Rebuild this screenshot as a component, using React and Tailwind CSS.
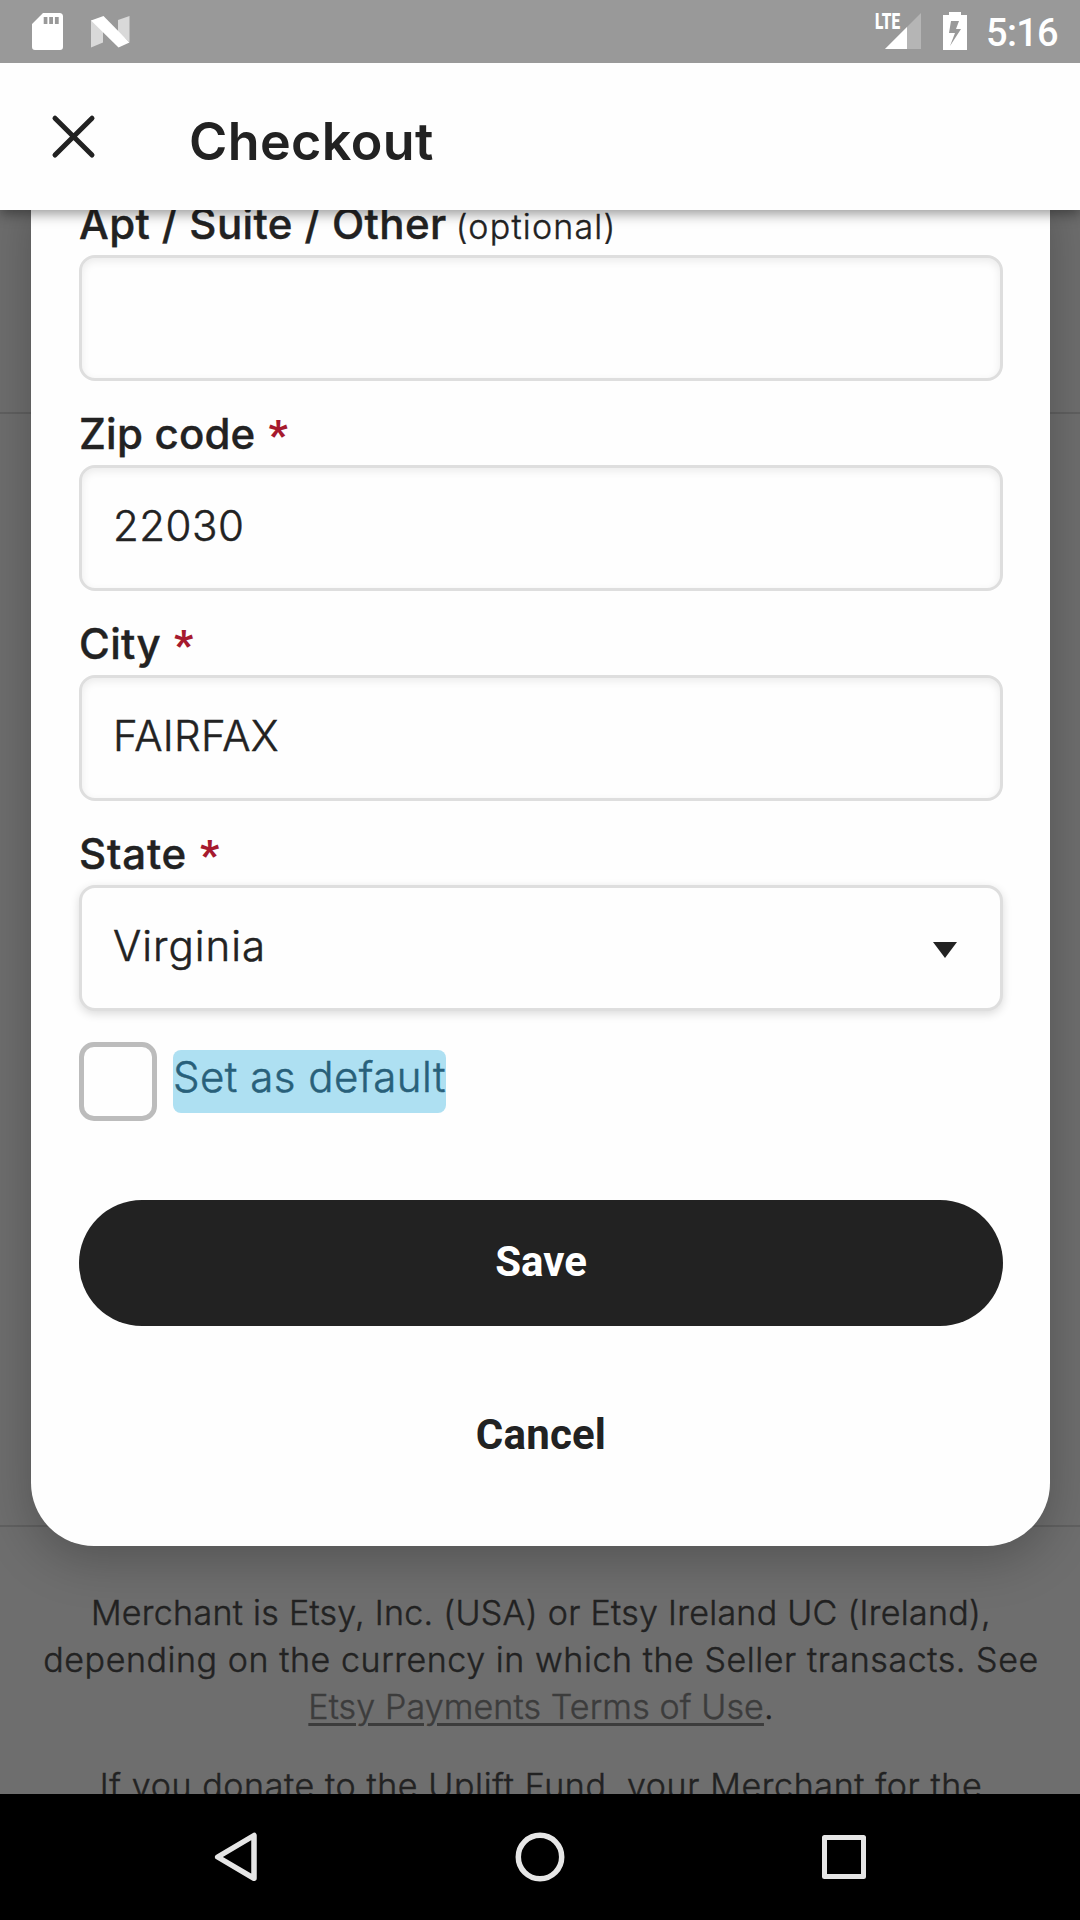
function StatusBar() {
  return (
    <div className="relative z-20 flex h-[63px] items-start bg-[#999999] text-white">
      <svg className="ml-[30px] mt-[11px] h-[42px] w-[34px]" viewBox="0 0 34 42">
        <path
          fill="#fff"
          fillRule="evenodd"
          d="M13 2h16.500a3.500 3.500 0 0 1 3.500 3.500v30.500a3 3 0 0 1-3 3H5a3 3 0 0 1-3-3V13zM13.700 6v7h3.700V6zM19.200 6v7H23V6zM24.900 6v7h3.800V6z"
        />
      </svg>
      <svg className="ml-[26px] mt-[14px] h-[34px] w-[40px]" viewBox="0 0 40 34">
        <path fill="#d9d9d9" d="M1 6 13 14V28.500L1 33.500zM28 6 39.500 2V28L28 18z" />
        <path fill="#fff" d="M1 6.500 13.500 2 39.500 28.500 28.500 33.500z" />
      </svg>
      <svg className="ml-auto mt-[11px] h-[40px] w-[48px] overflow-visible" viewBox="0 0 48 40">
        <path fill="#b5b5b5" d="M47 2V38H11z" />
        <path fill="#fff" d="M33 16V38H11z" />
        <text
          x="1"
          y="18.300"
          fill="#fff"
          textLength="25"
          lengthAdjust="spacingAndGlyphs"
          className="font-['Roboto',sans-serif] text-[22.500px] font-black"
        >
          LTE
        </text>
      </svg>
      <svg className="ml-[21px] mt-[12px] h-[38px] w-[24px]" viewBox="0 0 24 38">
        <path
          fill="#fff"
          fillRule="evenodd"
          d="M6 0h12v3h6v35H0V3h6zM8 9 6 21h6L7 34 18 17h-5l3-8z"
        />
      </svg>
      <div className="ml-[19px] mr-[21px] mt-[6px] w-[73px] whitespace-nowrap font-['Roboto',sans-serif] text-[38px] font-medium leading-[54px] tracking-[-0.7px]">
        5:16
      </div>
    </div>
  );
}

function Header() {
  return (
    <header className="relative z-10 flex h-[147px] items-start bg-[#fefefe] shadow-[0_4px_12px_rgba(0,0,0,0.4)]">
      <svg className="ml-[51px] mt-[50px] h-[46px] w-[45px]" viewBox="0 0 45 46" fill="none" stroke="#222" strokeWidth="5" strokeLinecap="round">
        <path d="M4 5.200 41 42M41 5.200 4 42" />
      </svg>
      <h1 className="ml-[93px] mt-[49px] text-[52px] font-semibold leading-[60px] tracking-[0.4px]">Checkout</h1>
    </header>
  );
}

function Label({ children, required, optional, tracking }) {
  return (
    <div className="mb-2 flex h-[46px] items-baseline whitespace-nowrap text-[42px] leading-[46px]">
      <span className={"font-medium [-webkit-text-stroke:0.4px_#222] " + tracking}>{children}</span>
      {required && (
        <span className="ml-[13px] font-['Roboto',sans-serif] text-[41px] font-black leading-[46px] text-[#a61a2e]">*</span>
      )}
      {optional && <span className="ml-[9px] text-[34px] font-light tracking-[1.2px] [-webkit-text-stroke:0.4px_#222]">(optional)</span>}
    </div>
  );
}

function Field({ label, labelTracking, required, optional, value, select, tracking }) {
  return (
    <div className="mb-[30px]">
      <Label required={required} optional={optional} tracking={labelTracking}>{label}</Label>
      <div
        className={
          "flex h-[126px] items-center rounded-[16px] border-[3px] border-[#dedede] bg-[#fefefe] pb-[5px] pl-[31px] pr-[43px] text-[42px] font-light [-webkit-text-stroke:0.5px_#222] " +
          (select
            ? "shadow-[0_3px_10px_rgba(0,0,0,0.14)]"
            : "shadow-[inset_0_3px_8px_rgba(0,0,0,0.08)]")
        }
      >
        <span className={tracking}>{value}</span>
        {select && (
          <svg className="ml-auto mt-[9px] h-[16px] w-[24px]" viewBox="0 0 24 16">
            <path fill="#222" d="M0 0h24L12 16z" />
          </svg>
        )}
      </div>
    </div>
  );
}

function AddressDialog() {
  return (
    <div className="absolute -top-[20px] left-[31px] right-[30px] h-[1356px] rounded-b-[63px] bg-[#fefefe] pl-[48px] pr-[47px] pt-[11px] shadow-[0_12px_50px_rgba(0,0,0,0.25)]">
      <Field label="Apt / Suite / Other" labelTracking="tracking-[0.4px]" optional />
      <Field label="Zip code" labelTracking="tracking-[0.2px]" required value="22030" tracking="tracking-[0.5px]" />
      <Field label="City" labelTracking="tracking-[0.35px]" required value="FAIRFAX" tracking="tracking-[0.3px]" />
      <Field label="State" labelTracking="tracking-[0.8px]" required value="Virginia" select tracking="tracking-[1px]" />

      <div className="mt-[31px] flex items-start">
        <div className="h-[79px] w-[78px] rounded-[15px] border-[5px] border-[#bcbcbc]" />
        <div className="ml-[16px] mt-[8px] h-[63px] w-[273px] whitespace-nowrap rounded-[8px] bg-[#aee0f2] text-[42px] font-light leading-[54px] tracking-[0.49px] text-[#28607a] [-webkit-text-stroke:0.5px_#28607a]">
          Set as default
        </div>
      </div>

      <div className="mt-[79px] flex h-[126px] items-center justify-center rounded-full bg-[#222] pb-[3px] font-['Roboto',sans-serif] text-[42px] font-bold text-white">
        Save
      </div>
      <div className="mt-[45px] flex h-[126px] items-center justify-center font-['Roboto',sans-serif] text-[42px] font-bold tracking-[0.19px]">
        Cancel
      </div>
    </div>
  );
}

function PageBehind() {
  return (
    <div className="text-center text-[34px] font-light leading-[47px]">
      <div className="h-[204px] border-b-2 border-[#606060]" />
      <div className="h-[1113px] border-b-2 border-[#606060]" />
      <div className="whitespace-nowrap pl-[2px] pt-[62px] [-webkit-text-stroke:0.45px]">
        <p className="tracking-[0.29px]">Merchant is Etsy, Inc. (USA) or Etsy Ireland UC (Ireland),</p>
        <p className="tracking-[0.57px]">depending on the currency in which the Seller transacts. See</p>
        <p className="tracking-[0.12px]">
          <span className="text-[#3c3c3c] underline decoration-[2.500px] underline-offset-[4px]">Etsy Payments Terms of Use</span>.
        </p>
        <p className="mt-[32px] tracking-[0.62px]">If you donate to the Uplift Fund, your Merchant for the</p>
      </div>
    </div>
  );
}

function NavBar() {
  return (
    <nav className="flex h-[126px] items-center justify-center gap-[246px] bg-black">
      <svg className="size-[58px]" viewBox="0 0 58 58" fill="none" stroke="#e6e6e6" strokeWidth="5.500" strokeLinejoin="round">
        <path d="M47 7.500V50.300L10.700 29z" />
      </svg>
      <svg className="size-[58px]" viewBox="0 0 58 58" fill="none" stroke="#e6e6e6" strokeWidth="5.500">
        <circle cx="29" cy="29" r="21.700" />
      </svg>
      <svg className="size-[58px]" viewBox="0 0 58 58" fill="none" stroke="#e6e6e6" strokeWidth="5" strokeLinejoin="round">
        <rect x="9.500" y="9.500" width="39" height="39" />
      </svg>
    </nav>
  );
}

export default function App() {
  return (
    <div className="flex h-[1920px] w-[1080px] flex-col overflow-hidden font-['Inter',sans-serif] text-[#222]">
      <StatusBar />
      <Header />
      <main className="relative h-[1584px] overflow-hidden bg-[#6e6e6e]">
        <PageBehind />
        <AddressDialog />
      </main>
      <NavBar />
    </div>
  );
}
